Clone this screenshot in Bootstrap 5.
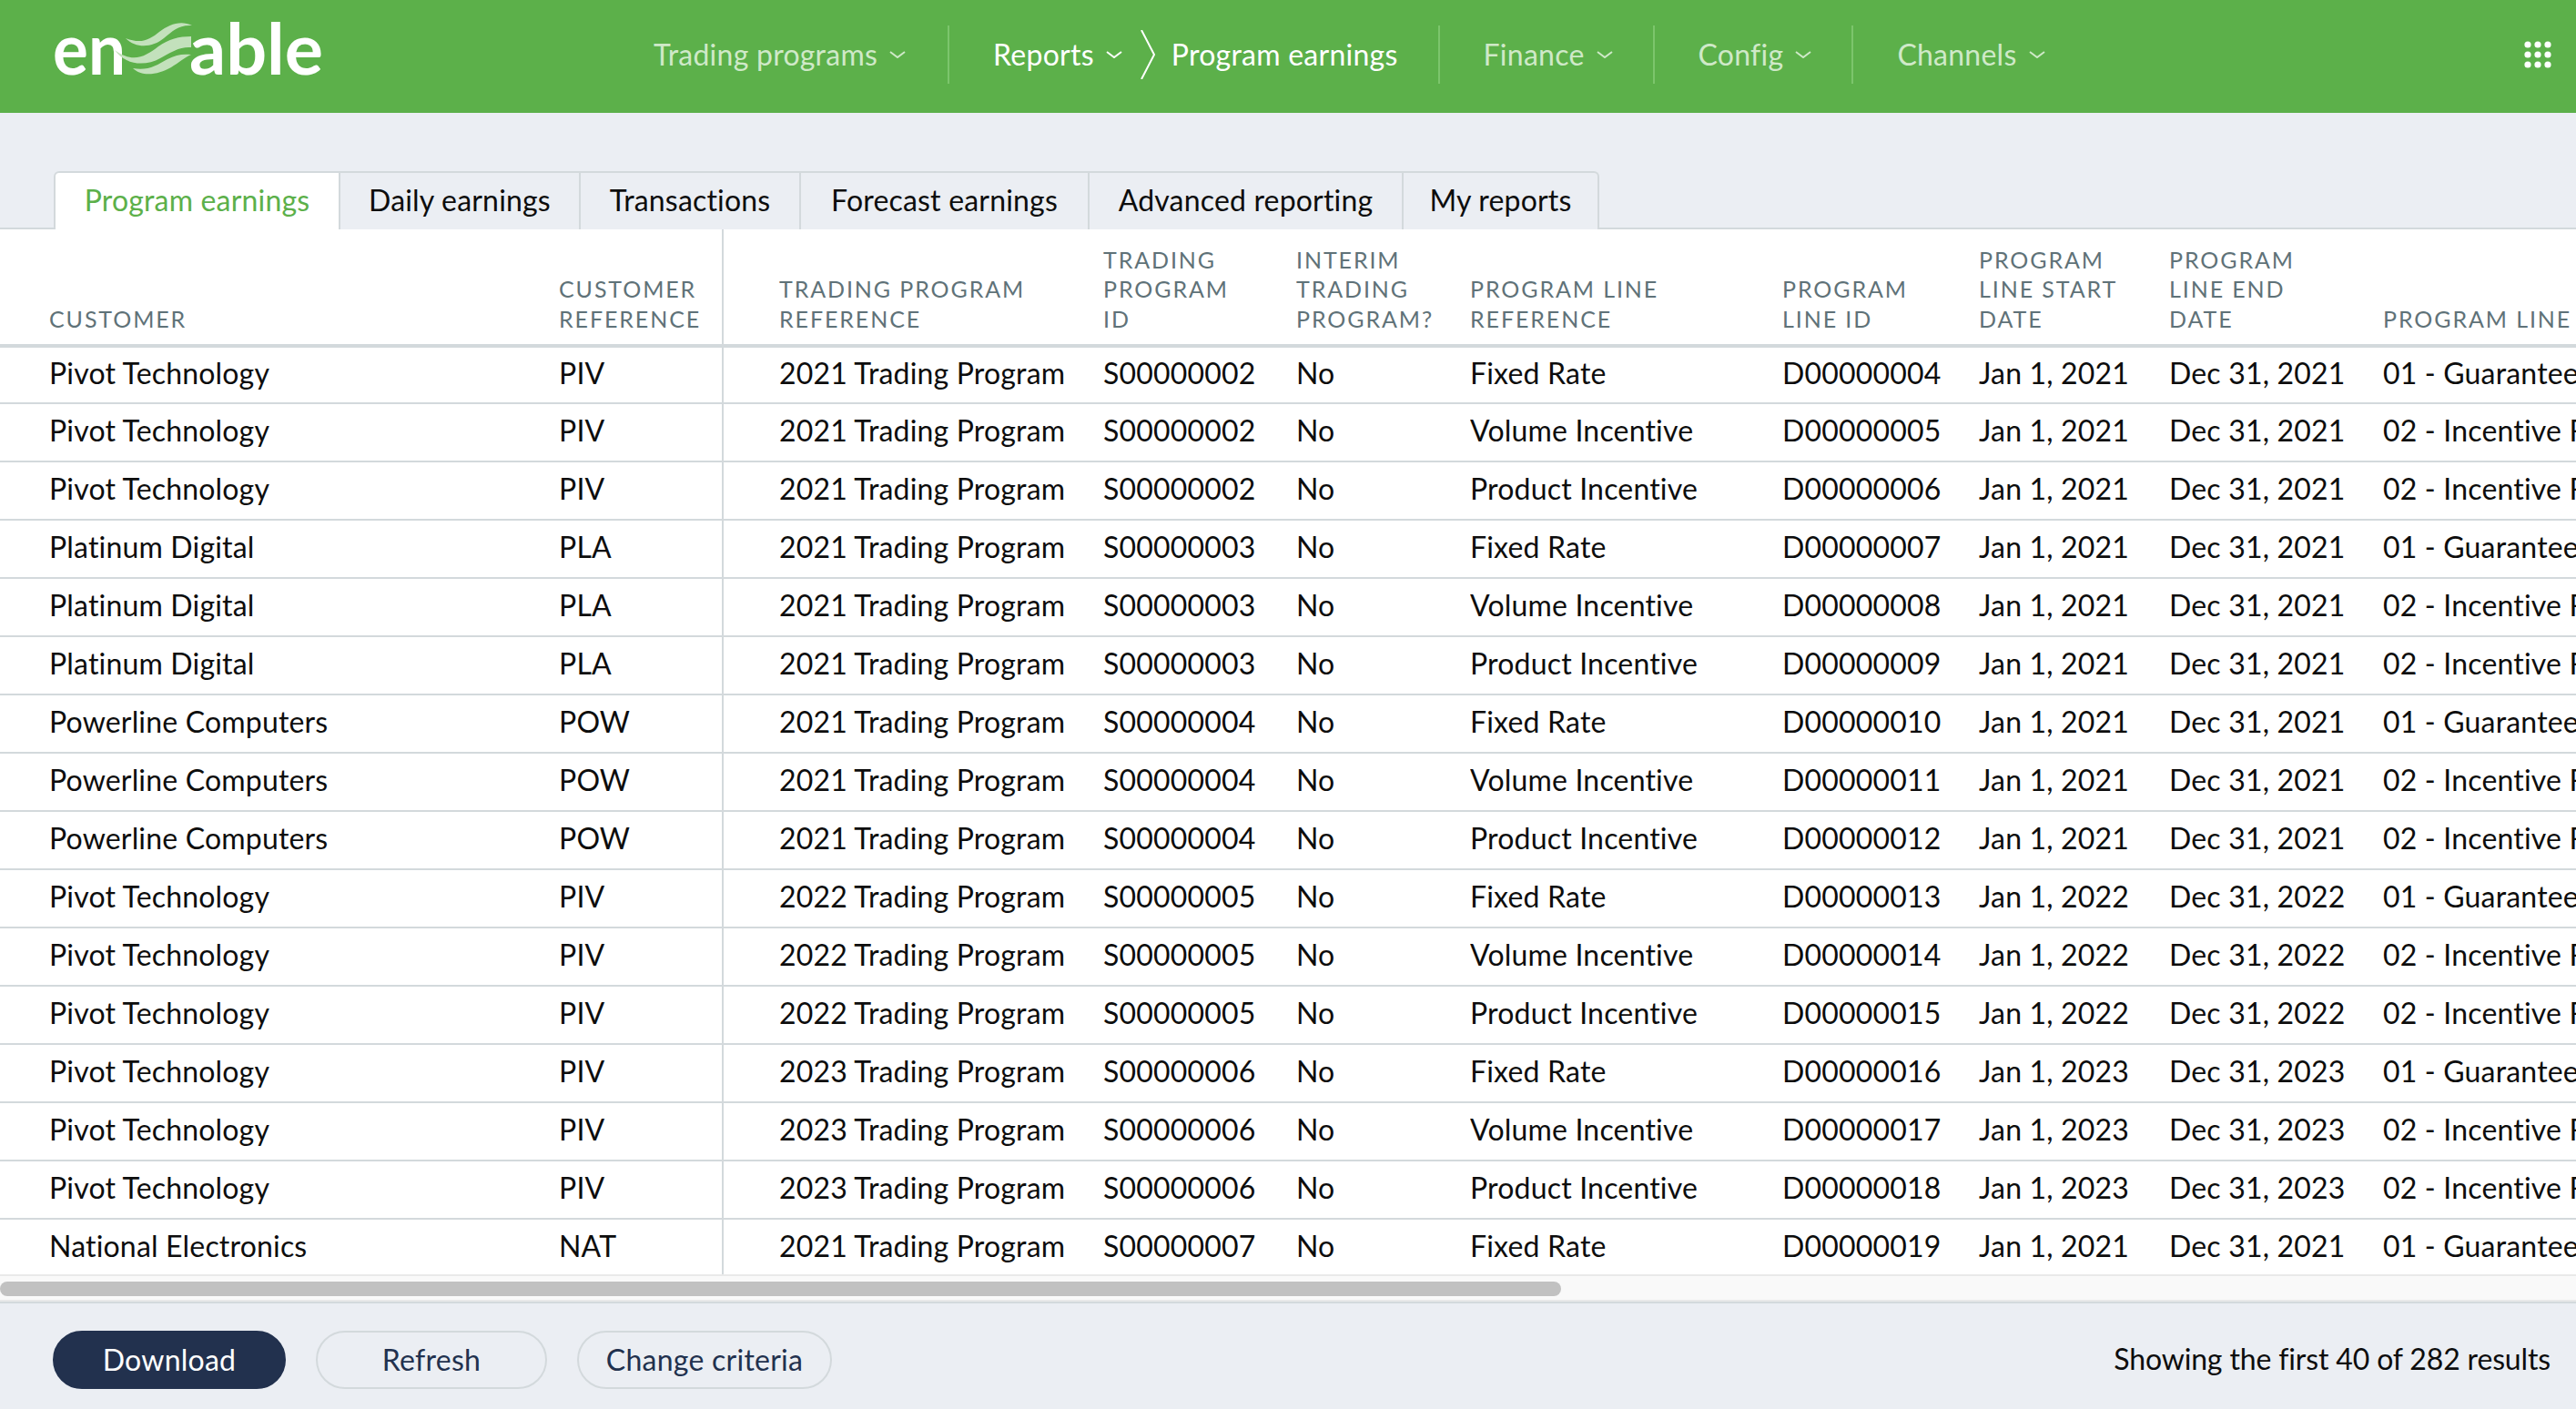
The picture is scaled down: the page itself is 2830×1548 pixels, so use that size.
<!doctype html>
<html lang="en"><head><meta charset="utf-8"><title>Program earnings</title>
<link href="https://cdn.jsdelivr.net/npm/bootstrap@5.3.0/dist/css/bootstrap.min.css" rel="stylesheet">
<style>
html,body{height:100%;}
body{background:#ebeef3;font-family:Lato,"Liberation Sans",sans-serif;font-size:32px;letter-spacing:.18px;color:#0d0d0d;overflow:hidden;}
.app-shell{height:1548px;}
.top-bar{height:124px;background:#5cb04a;padding:0;flex-wrap:nowrap;}
.brand-logo{margin-left:40px;width:330px;height:124px;display:block;flex:none;}
.brand-logo text{font-family:Lato,sans-serif;font-weight:700;font-size:78px;fill:#fff;letter-spacing:0;}
.main-nav{margin-left:348px;margin-bottom:4px;height:64px;align-items:center;flex-direction:row;letter-spacing:.25px;}
.main-nav .nav-link{color:#cfe9c8;padding:0;font-size:32px;line-height:64px;display:flex;align-items:center;white-space:nowrap;}
.main-nav .nav-item{height:64px;padding:0 44px 0 48px;border-left:2px solid #7cc56c;}
.main-nav .nav-item:first-child{border-left:0;padding:0 46px 0 0;}
.main-nav .nav-item.now .nav-link{color:#fff;}
.chev{width:18px;height:8px;margin-left:13px;flex:none;}
.crumb-chev{width:16px;height:54px;margin:0 18px 0 20px;flex:none;}
.apps-dots{margin-left:auto;margin-right:27px;margin-bottom:4px;width:30px;height:30px;display:block;}
.tab-row{margin-top:64px;height:64px;padding-left:59px;border-bottom:2px solid #d3d9dc;flex-wrap:nowrap;}
.tab-row .nav-item{margin:0;}
.tab-row .nav-link{height:64px;margin:0;padding:0;text-align:center;line-height:60px;background:#ebeef3;color:#0d0d0d;border:2px solid #d3d9dc;border-width:2px 2px 0 0;border-radius:0;white-space:nowrap;}
.tab-row .nav-item:first-child .nav-link{border-left-width:2px;border-top-left-radius:6px;}
.tab-row .nav-item:last-child .nav-link{border-top-right-radius:6px;}
.tab-row .nav-link.active{background:#fff;color:#5cb04a;height:64px;}
.tw-a{width:315px;}.tw-b{width:264px;}.tw-c{width:242px;}.tw-d{width:317px;}.tw-e{width:345px;}.tw-f{width:215px;}
.sheet{flex:1 1 0;min-height:0;background:#fff;overflow:hidden;}
.table.earn{table-layout:fixed;width:2900px;margin:0;border-collapse:separate;border-spacing:0;--bs-table-bg:#fff;}
.table.earn th{height:130px;padding:0 0 12px;vertical-align:bottom;font-weight:400;font-size:25px;line-height:32.5px;letter-spacing:1.9px;color:#5f7278;text-transform:uppercase;border-bottom:4px solid #d3d9dc;white-space:nowrap;}
.table.earn td{height:64px;padding:0 0 4px;vertical-align:middle;color:#0d0d0d;border-bottom:2px solid #d3d9dc;white-space:nowrap;overflow:hidden;}
.table.earn tbody tr:first-child td{height:62px;}
.table.earn .first-cell{padding-left:54px;}
.table.earn .edge-cell{border-right:2px solid #d3d9dc;}
.table.earn .after-edge{padding-left:61px;}
.scroll-track{height:30px;background:#f9f9f9;border-top:2px solid #e9e9e9;border-bottom:2px solid #e9e9e9;padding-top:6px;flex:none;}
.scroll-thumb{height:16px;background:#c1c1c1;border-radius:8px;}
.foot-bar{height:118px;border-top:2px solid #d3d9dc;padding:8px 28px 0 58px;flex:none;}
.foot-btn{height:64px;font-size:32px;line-height:60px;padding:0;border-radius:32px;color:#22314e;border:2px solid #d3d9dc;background:transparent;letter-spacing:.25px;}
.foot-btn.solid{background:#22314e;border-color:#22314e;color:#fff;width:256px;}
.foot-btn.w-refresh{width:254px;}
.foot-btn.w-change{width:280px;}
.foot-gap{gap:33px;}
.foot-note{letter-spacing:-.15px;margin-bottom:2px;}
</style></head>
<body>
<div class="app-shell d-flex flex-column">
<nav class="navbar top-bar d-flex align-items-center">
  <svg class="brand-logo" viewBox="40 0 330 124" aria-label="enable">
    <text x="58" y="82" textLength="80" lengthAdjust="spacingAndGlyphs">en</text>
    <text x="208" y="82" textLength="147" lengthAdjust="spacingAndGlyphs">able</text>
    <g fill="#c3e1bc">
      <path d="M138 42C156 49 165 43 175 35C186 27 198 22 211 28C196 27 190 34 180 42C168 52 150 54 138 42Z"/>
      <path d="M126 55C146 70 160 62 174 51C185 43 197 40 210 40V52C198 51 188 57 176 64C160 73 138 72 126 55Z"/>
      <path d="M146 75C162 78 172 72 184 65C193 60 201 59 210 60C203 63 196 69 188 74C174 82 156 85 146 75Z"/>
    </g>
  </svg>
  <ul class="navbar-nav main-nav">
    <li class="nav-item"><a class="nav-link" href="#">Trading programs<svg class="chev" viewBox="0 0 18 8"><path d="M1 1L9 7L17 1" fill="none" stroke="currentColor" stroke-width="2"/></svg></a></li>
    <li class="nav-item now"><a class="nav-link" href="#">Reports<svg class="chev" viewBox="0 0 18 8"><path d="M1 1L9 7L17 1" fill="none" stroke="currentColor" stroke-width="2"/></svg><svg class="crumb-chev" viewBox="0 0 16 54"><path d="M1 0L15 27L1 54" fill="none" stroke="#fff" stroke-width="2"/></svg>Program earnings</a></li>
    <li class="nav-item"><a class="nav-link" href="#">Finance<svg class="chev" viewBox="0 0 18 8"><path d="M1 1L9 7L17 1" fill="none" stroke="currentColor" stroke-width="2"/></svg></a></li>
    <li class="nav-item"><a class="nav-link" href="#">Config<svg class="chev" viewBox="0 0 18 8"><path d="M1 1L9 7L17 1" fill="none" stroke="currentColor" stroke-width="2"/></svg></a></li>
    <li class="nav-item"><a class="nav-link" href="#">Channels<svg class="chev" viewBox="0 0 18 8"><path d="M1 1L9 7L17 1" fill="none" stroke="currentColor" stroke-width="2"/></svg></a></li>
  </ul>
  <svg class="apps-dots" viewBox="0 0 30 30" fill="#fff"><circle cx="4" cy="4" r="3.6"/><circle cx="15" cy="4" r="3.6"/><circle cx="26" cy="4" r="3.6"/><circle cx="4" cy="15" r="3.6"/><circle cx="15" cy="15" r="3.6"/><circle cx="26" cy="15" r="3.6"/><circle cx="4" cy="26" r="3.6"/><circle cx="15" cy="26" r="3.6"/><circle cx="26" cy="26" r="3.6"/></svg>
</nav>
<ul class="nav tab-row">
  <li class="nav-item"><a class="nav-link active tw-a" href="#">Program earnings</a></li>
  <li class="nav-item"><a class="nav-link tw-b" href="#">Daily earnings</a></li>
  <li class="nav-item"><a class="nav-link tw-c" href="#">Transactions</a></li>
  <li class="nav-item"><a class="nav-link tw-d" href="#">Forecast earnings</a></li>
  <li class="nav-item"><a class="nav-link tw-e" href="#">Advanced reporting</a></li>
  <li class="nav-item"><a class="nav-link tw-f" href="#">My reports</a></li>
</ul>
<div class="sheet">
<table class="table earn">
<colgroup><col style="width:614px"><col style="width:181px"><col style="width:417px"><col style="width:212px"><col style="width:191px"><col style="width:343px"><col style="width:216px"><col style="width:209px"><col style="width:235px"><col style="width:482px"></colgroup>
<thead><tr><th class="first-cell">Customer</th><th class="edge-cell">Customer<br>reference</th><th class="after-edge">Trading program<br>reference</th><th>Trading<br>program<br>ID</th><th>Interim<br>trading<br>program?</th><th>Program line<br>reference</th><th>Program<br>line ID</th><th>Program<br>line start<br>date</th><th>Program<br>line end<br>date</th><th>Program line</th></tr></thead>
<tbody>
<tr><td class="first-cell">Pivot Technology</td><td class="edge-cell">PIV</td><td class="after-edge">2021 Trading Program</td><td>S00000002</td><td>No</td><td>Fixed Rate</td><td>D00000004</td><td>Jan 1, 2021</td><td>Dec 31, 2021</td><td>01 - Guaranteed Rate</td></tr>
<tr><td class="first-cell">Pivot Technology</td><td class="edge-cell">PIV</td><td class="after-edge">2021 Trading Program</td><td>S00000002</td><td>No</td><td>Volume Incentive</td><td>D00000005</td><td>Jan 1, 2021</td><td>Dec 31, 2021</td><td>02 - Incentive Rate</td></tr>
<tr><td class="first-cell">Pivot Technology</td><td class="edge-cell">PIV</td><td class="after-edge">2021 Trading Program</td><td>S00000002</td><td>No</td><td>Product Incentive</td><td>D00000006</td><td>Jan 1, 2021</td><td>Dec 31, 2021</td><td>02 - Incentive Rate</td></tr>
<tr><td class="first-cell">Platinum Digital</td><td class="edge-cell">PLA</td><td class="after-edge">2021 Trading Program</td><td>S00000003</td><td>No</td><td>Fixed Rate</td><td>D00000007</td><td>Jan 1, 2021</td><td>Dec 31, 2021</td><td>01 - Guaranteed Rate</td></tr>
<tr><td class="first-cell">Platinum Digital</td><td class="edge-cell">PLA</td><td class="after-edge">2021 Trading Program</td><td>S00000003</td><td>No</td><td>Volume Incentive</td><td>D00000008</td><td>Jan 1, 2021</td><td>Dec 31, 2021</td><td>02 - Incentive Rate</td></tr>
<tr><td class="first-cell">Platinum Digital</td><td class="edge-cell">PLA</td><td class="after-edge">2021 Trading Program</td><td>S00000003</td><td>No</td><td>Product Incentive</td><td>D00000009</td><td>Jan 1, 2021</td><td>Dec 31, 2021</td><td>02 - Incentive Rate</td></tr>
<tr><td class="first-cell">Powerline Computers</td><td class="edge-cell">POW</td><td class="after-edge">2021 Trading Program</td><td>S00000004</td><td>No</td><td>Fixed Rate</td><td>D00000010</td><td>Jan 1, 2021</td><td>Dec 31, 2021</td><td>01 - Guaranteed Rate</td></tr>
<tr><td class="first-cell">Powerline Computers</td><td class="edge-cell">POW</td><td class="after-edge">2021 Trading Program</td><td>S00000004</td><td>No</td><td>Volume Incentive</td><td>D00000011</td><td>Jan 1, 2021</td><td>Dec 31, 2021</td><td>02 - Incentive Rate</td></tr>
<tr><td class="first-cell">Powerline Computers</td><td class="edge-cell">POW</td><td class="after-edge">2021 Trading Program</td><td>S00000004</td><td>No</td><td>Product Incentive</td><td>D00000012</td><td>Jan 1, 2021</td><td>Dec 31, 2021</td><td>02 - Incentive Rate</td></tr>
<tr><td class="first-cell">Pivot Technology</td><td class="edge-cell">PIV</td><td class="after-edge">2022 Trading Program</td><td>S00000005</td><td>No</td><td>Fixed Rate</td><td>D00000013</td><td>Jan 1, 2022</td><td>Dec 31, 2022</td><td>01 - Guaranteed Rate</td></tr>
<tr><td class="first-cell">Pivot Technology</td><td class="edge-cell">PIV</td><td class="after-edge">2022 Trading Program</td><td>S00000005</td><td>No</td><td>Volume Incentive</td><td>D00000014</td><td>Jan 1, 2022</td><td>Dec 31, 2022</td><td>02 - Incentive Rate</td></tr>
<tr><td class="first-cell">Pivot Technology</td><td class="edge-cell">PIV</td><td class="after-edge">2022 Trading Program</td><td>S00000005</td><td>No</td><td>Product Incentive</td><td>D00000015</td><td>Jan 1, 2022</td><td>Dec 31, 2022</td><td>02 - Incentive Rate</td></tr>
<tr><td class="first-cell">Pivot Technology</td><td class="edge-cell">PIV</td><td class="after-edge">2023 Trading Program</td><td>S00000006</td><td>No</td><td>Fixed Rate</td><td>D00000016</td><td>Jan 1, 2023</td><td>Dec 31, 2023</td><td>01 - Guaranteed Rate</td></tr>
<tr><td class="first-cell">Pivot Technology</td><td class="edge-cell">PIV</td><td class="after-edge">2023 Trading Program</td><td>S00000006</td><td>No</td><td>Volume Incentive</td><td>D00000017</td><td>Jan 1, 2023</td><td>Dec 31, 2023</td><td>02 - Incentive Rate</td></tr>
<tr><td class="first-cell">Pivot Technology</td><td class="edge-cell">PIV</td><td class="after-edge">2023 Trading Program</td><td>S00000006</td><td>No</td><td>Product Incentive</td><td>D00000018</td><td>Jan 1, 2023</td><td>Dec 31, 2023</td><td>02 - Incentive Rate</td></tr>
<tr><td class="first-cell">National Electronics</td><td class="edge-cell">NAT</td><td class="after-edge">2021 Trading Program</td><td>S00000007</td><td>No</td><td>Fixed Rate</td><td>D00000019</td><td>Jan 1, 2021</td><td>Dec 31, 2021</td><td>01 - Guaranteed Rate</td></tr>
</tbody></table>
</div>
<div class="scroll-track"><div class="scroll-thumb" style="width:1715px"></div></div>
<div class="foot-bar d-flex align-items-center justify-content-between">
  <div class="d-flex foot-gap"><button class="btn foot-btn solid">Download</button><button class="btn foot-btn w-refresh">Refresh</button><button class="btn foot-btn w-change">Change criteria</button></div>
  <div class="foot-note">Showing the first 40 of 282 results</div>
</div>
</div>
</body></html>
